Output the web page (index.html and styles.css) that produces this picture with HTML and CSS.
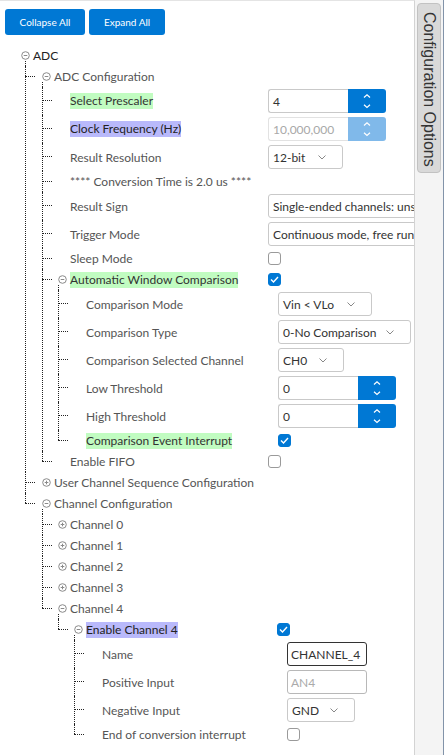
FILE: index.html
```html
<!DOCTYPE html>
<html>
<head>
<meta charset="utf-8">
<link rel="stylesheet" href="styles.css">
</head>
<body>
<div class="main">
  <div class="toolbar">
    <button class="btn btn-collapse">Collapse All</button>
    <button class="btn btn-expand">Expand All</button>
  </div>
  <div class="tree">
    <ul class="root">
      <li class="root-li">
        <div class="row"><span class="tog"><svg width="9" height="9" viewBox="0 0 9 9"><circle cx="4.5" cy="4.5" r="3.8"/><line x1="2.7" y1="4.5" x2="6.3" y2="4.5"/></svg></span><span class="lbl root-lbl">ADC</span></div>
        <ul class="sub lv1">
          <li>
            <div class="row"><span class="tog"><svg width="9" height="9" viewBox="0 0 9 9"><circle cx="4.5" cy="4.5" r="3.8"/><line x1="2.7" y1="4.5" x2="6.3" y2="4.5"/></svg></span><span class="lbl">ADC Configuration</span></div>
            <ul class="sub">
              <li>
                <div class="row tall"><span class="tog"></span><span class="cell w2"><span class="hl green">Select Prescaler</span></span>
                  <div class="spin"><div class="box">4</div><div class="arr"><svg width="10" height="24" viewBox="0 0 10 24"><polyline points="2,8.5 5,5.8 8,8.5"/><polyline points="2,15.8 5,18.5 8,15.8"/></svg></div></div>
                </div>
              </li>
              <li>
                <div class="row tall"><span class="tog"></span><span class="cell w2"><span class="hl blue">Clock Frequency (Hz)</span></span>
                  <div class="spin dis"><div class="box">10,000,000</div><div class="arr"><svg width="10" height="24" viewBox="0 0 10 24"><polyline points="2,8.5 5,5.8 8,8.5"/><polyline points="2,15.8 5,18.5 8,15.8"/></svg></div></div>
                </div>
              </li>
              <li>
                <div class="row tall"><span class="tog"></span><span class="cell w2">Result Resolution</span>
                  <div class="sel s75"><span>12-bit</span><svg width="8" height="5" viewBox="0 0 8 5"><polyline points="0.5,0.5 4,4 7.5,0.5"/></svg></div>
                </div>
              </li>
              <li>
                <div class="row"><span class="tog"></span><span class="cell">**** Conversion Time is 2.0 us ****</span></div>
              </li>
              <li>
                <div class="row tall"><span class="tog"></span><span class="cell w2">Result Sign</span>
                  <div class="sel wide"><span>Single-ended channels: unsigned</span></div>
                </div>
              </li>
              <li>
                <div class="row tall"><span class="tog"></span><span class="cell w2">Trigger Mode</span>
                  <div class="sel wide"><span>Continuous mode, free run mode</span></div>
                </div>
              </li>
              <li>
                <div class="row"><span class="tog"></span><span class="cell w2">Sleep Mode</span><span class="cb"></span></div>
              </li>
              <li>
                <div class="row"><span class="tog"><svg width="9" height="9" viewBox="0 0 9 9"><circle cx="4.5" cy="4.5" r="3.8"/><line x1="2.7" y1="4.5" x2="6.3" y2="4.5"/></svg></span><span class="cell w2"><span class="hl green">Automatic Window Comparison</span></span>
                  <span class="cb on"><svg width="9" height="7" viewBox="0 0 9 7"><polyline points="1,3.5 3.5,6 8,1"/></svg></span>
                </div>
                <ul class="sub">
                  <li>
                    <div class="row tall"><span class="tog"></span><span class="cell w3">Comparison Mode</span>
                      <div class="sel s94"><span>Vin &lt; VLo</span><svg width="8" height="5" viewBox="0 0 8 5"><polyline points="0.5,0.5 4,4 7.5,0.5"/></svg></div>
                    </div>
                  </li>
                  <li>
                    <div class="row tall"><span class="tog"></span><span class="cell w3">Comparison Type</span>
                      <div class="sel s133"><span>0-No Comparison</span><svg width="8" height="5" viewBox="0 0 8 5"><polyline points="0.5,0.5 4,4 7.5,0.5"/></svg></div>
                    </div>
                  </li>
                  <li>
                    <div class="row tall"><span class="tog"></span><span class="cell w3">Comparison Selected Channel</span>
                      <div class="sel s66"><span>CH0</span><svg width="8" height="5" viewBox="0 0 8 5"><polyline points="0.5,0.5 4,4 7.5,0.5"/></svg></div>
                    </div>
                  </li>
                  <li>
                    <div class="row tall"><span class="tog"></span><span class="cell w3">Low Threshold</span>
                      <div class="spin"><div class="box">0</div><div class="arr"><svg width="10" height="24" viewBox="0 0 10 24"><polyline points="2,8.5 5,5.8 8,8.5"/><polyline points="2,15.8 5,18.5 8,15.8"/></svg></div></div>
                    </div>
                  </li>
                  <li>
                    <div class="row tall"><span class="tog"></span><span class="cell w3">High Threshold</span>
                      <div class="spin"><div class="box">0</div><div class="arr"><svg width="10" height="24" viewBox="0 0 10 24"><polyline points="2,8.5 5,5.8 8,8.5"/><polyline points="2,15.8 5,18.5 8,15.8"/></svg></div></div>
                    </div>
                  </li>
                  <li>
                    <div class="row"><span class="tog"></span><span class="cell w3"><span class="hl green">Comparison Event Interrupt</span></span>
                      <span class="cb on"><svg width="9" height="7" viewBox="0 0 9 7"><polyline points="1,3.5 3.5,6 8,1"/></svg></span>
                    </div>
                  </li>
                </ul>
              </li>
              <li>
                <div class="row"><span class="tog"></span><span class="cell w2">Enable FIFO</span><span class="cb"></span></div>
              </li>
            </ul>
          </li>
          <li>
            <div class="row"><span class="tog"><svg width="9" height="9" viewBox="0 0 9 9"><circle cx="4.5" cy="4.5" r="3.8"/><line x1="2.7" y1="4.5" x2="6.3" y2="4.5"/><line x1="4.5" y1="2.7" x2="4.5" y2="6.3"/></svg></span><span class="lbl">User Channel Sequence Configuration</span></div>
          </li>
          <li>
            <div class="row"><span class="tog"><svg width="9" height="9" viewBox="0 0 9 9"><circle cx="4.5" cy="4.5" r="3.8"/><line x1="2.7" y1="4.5" x2="6.3" y2="4.5"/></svg></span><span class="lbl">Channel Configuration</span></div>
            <ul class="sub">
              <li><div class="row"><span class="tog"><svg width="9" height="9" viewBox="0 0 9 9"><circle cx="4.5" cy="4.5" r="3.8"/><line x1="2.7" y1="4.5" x2="6.3" y2="4.5"/><line x1="4.5" y1="2.7" x2="4.5" y2="6.3"/></svg></span><span class="lbl">Channel 0</span></div></li>
              <li><div class="row"><span class="tog"><svg width="9" height="9" viewBox="0 0 9 9"><circle cx="4.5" cy="4.5" r="3.8"/><line x1="2.7" y1="4.5" x2="6.3" y2="4.5"/><line x1="4.5" y1="2.7" x2="4.5" y2="6.3"/></svg></span><span class="lbl">Channel 1</span></div></li>
              <li><div class="row"><span class="tog"><svg width="9" height="9" viewBox="0 0 9 9"><circle cx="4.5" cy="4.5" r="3.8"/><line x1="2.7" y1="4.5" x2="6.3" y2="4.5"/><line x1="4.5" y1="2.7" x2="4.5" y2="6.3"/></svg></span><span class="lbl">Channel 2</span></div></li>
              <li><div class="row"><span class="tog"><svg width="9" height="9" viewBox="0 0 9 9"><circle cx="4.5" cy="4.5" r="3.8"/><line x1="2.7" y1="4.5" x2="6.3" y2="4.5"/><line x1="4.5" y1="2.7" x2="4.5" y2="6.3"/></svg></span><span class="lbl">Channel 3</span></div></li>
              <li>
                <div class="row"><span class="tog"><svg width="9" height="9" viewBox="0 0 9 9"><circle cx="4.5" cy="4.5" r="3.8"/><line x1="2.7" y1="4.5" x2="6.3" y2="4.5"/></svg></span><span class="lbl">Channel 4</span></div>
                <ul class="sub">
                  <li>
                    <div class="row"><span class="tog"><svg width="9" height="9" viewBox="0 0 9 9"><circle cx="4.5" cy="4.5" r="3.8"/><line x1="2.7" y1="4.5" x2="6.3" y2="4.5"/></svg></span><span class="cell w3e"><span class="hl blue">Enable Channel 4</span></span>
                      <span class="cb on"><svg width="9" height="7" viewBox="0 0 9 7"><polyline points="1,3.5 3.5,6 8,1"/></svg></span>
                    </div>
                    <ul class="sub">
                      <li>
                        <div class="row tall"><span class="tog"></span><span class="cell w4">Name</span>
                          <div class="txt">CHANNEL_4</div>
                        </div>
                      </li>
                      <li>
                        <div class="row tall"><span class="tog"></span><span class="cell w4">Positive Input</span>
                          <div class="txt dis">AN4</div>
                        </div>
                      </li>
                      <li>
                        <div class="row tall"><span class="tog"></span><span class="cell w4">Negative Input</span>
                          <div class="sel s68"><span>GND</span><svg width="8" height="5" viewBox="0 0 8 5"><polyline points="0.5,0.5 4,4 7.5,0.5"/></svg></div>
                        </div>
                      </li>
                      <li>
                        <div class="row"><span class="tog"></span><span class="cell w4">End of conversion interrupt</span><span class="cb"></span></div>
                      </li>
                    </ul>
                  </li>
                </ul>
              </li>
            </ul>
          </li>
        </ul>
      </li>
    </ul>
  </div>
</div>
<div class="side">
  <div class="tab">Configuration Options</div>
</div>
</body>
</html>
```
FILE: styles.css
```css
html, body {
  margin: 0;
  padding: 0;
}
body {
  font-family: Lato, "Noto Sans", sans-serif;
  font-size: 12px;
  color: #555;
  display: flex;
  height: 755px;
  overflow: hidden;
  background: #fff;
}
.main {
  width: 414px;
  flex-shrink: 0;
  border-right: 1px solid #d3d3d3;
  border-top: 1px solid #e4e4e4;
  overflow: hidden;
}
.toolbar {
  display: flex;
  gap: 4px;
  padding: 8px 0 0 5px;
}
.btn {
  height: 26px;
  border: 0;
  border-radius: 3px;
  background: #0078d4;
  color: #fff;
  font-family: Lato, "Noto Sans", sans-serif;
  font-size: 10px;
  padding: 0;
}
.btn-collapse { width: 80px; }
.btn-expand { width: 76px; }

.tree {
  margin-top: 10px;
  padding-left: 21px;
}
ul {
  list-style: none;
  margin: 0;
  padding: 0;
  position: relative;
}
.sub { --ind: 16px; }
.lv1 { --ind: 17px; margin-left: 4px; }
li {
  position: relative;
  padding-left: var(--ind);
}
.root-li { padding-left: 0; }
.sub::before {
  content: "";
  position: absolute;
  left: 0;
  top: -5px;
  height: 5px;
  border-left: 1px dotted #222;
}
.sub > li:not(:last-child)::after {
  content: "";
  position: absolute;
  left: 0;
  top: 0;
  bottom: 0;
  border-left: 1px dotted #222;
}
.row {
  position: relative;
  display: flex;
  align-items: center;
  height: 21px;
  white-space: nowrap;
}
.row.tall { height: 28px; }
.sub > li > .row::before {
  content: "";
  position: absolute;
  left: calc(-1 * var(--ind));
  top: 10px;
  width: 10px;
  border-top: 1px dotted #222;
}
.sub > li > .row.tall::before { top: 13px; }
.sub > li:last-child > .row::after {
  content: "";
  position: absolute;
  left: calc(-1 * var(--ind));
  top: 0;
  height: 10px;
  border-left: 1px dotted #222;
}
.sub > li:last-child > .row.tall::after { height: 13px; }

.tog {
  width: 9px;
  height: 9px;
  margin-right: 3px;
  flex-shrink: 0;
  display: flex;
}
.tog svg {
  fill: none;
  stroke: #8a8a8a;
  stroke-width: 1;
}
.lbl { color: #555; }
.root-lbl { color: #222; }
.cell {
  flex-shrink: 0;
  color: #555;
}
.w2 { width: 198px; }
.w3 { width: 192px; }
.w3e { width: 191px; }
.w4 { width: 185px; }
.hl {
  display: inline-block;
  line-height: 16px;
  color: #333;
}
.hl.green { background: #c1fcc1; }
.hl.blue { background: #b9b9fb; color: #222; }

.spin {
  display: flex;
  height: 24px;
  flex-shrink: 0;
}
.spin .box {
  width: 80px;
  box-sizing: border-box;
  border: 1px solid #c9c9c9;
  border-right: 0;
  border-radius: 3px 0 0 3px;
  padding-left: 4px;
  display: flex;
  align-items: center;
  color: #333;
}
.spin .arr {
  width: 38px;
  background: #0078d4;
  border-radius: 0 3px 3px 0;
  display: flex;
  justify-content: center;
  align-items: center;
}
.spin .arr svg {
  fill: none;
  stroke: #fff;
  stroke-width: 1.2;
}
.spin.dis .box {
  border-color: #e2e2e2;
  color: #a8a8a8;
}
.spin.dis .arr { background: #80b9ea; }

.sel {
  height: 24px;
  box-sizing: border-box;
  border: 1px solid #c9c9c9;
  border-radius: 3px;
  display: flex;
  align-items: center;
  justify-content: space-between;
  padding-left: 4px;
  color: #333;
  flex-shrink: 0;
  overflow: hidden;
}
.sel svg {
  margin-right: 16px;
  flex-shrink: 0;
  fill: none;
  stroke: #888;
  stroke-width: 1;
}
.s75 { width: 75px; }
.s94 { width: 94px; }
.s133 { width: 133px; }
.s66 { width: 66px; }
.s68 { width: 68px; }
.wide { width: 200px; }

.txt {
  width: 80px;
  height: 24px;
  box-sizing: border-box;
  border: 1px solid #333;
  border-radius: 3px;
  padding-left: 3px;
  display: flex;
  align-items: center;
  color: #333;
  flex-shrink: 0;
}
.txt.dis {
  border-color: #b8b8b8;
  color: #aaa;
}

.cb {
  width: 13px;
  height: 13px;
  box-sizing: border-box;
  border: 1px solid #9a9a9a;
  border-radius: 3px;
  background: #fff;
  flex-shrink: 0;
}
.cb.on {
  background: #0078d4;
  border-color: #0078d4;
  display: flex;
  align-items: center;
  justify-content: center;
}
.cb.on svg {
  fill: none;
  stroke: #fff;
  stroke-width: 1.4;
}

.side {
  width: 26px;
  padding: 3px 0 0 2px;
  background: #f4f4f4;
  border-right: 1px solid #8293a9;
  margin-right: 3px;
}
.tab {
  width: 24px;
  height: 170px;
  box-sizing: border-box;
  background: #d9d9d9;
  border: 1px solid #c2c2c2;
  border-radius: 4px;
  writing-mode: vertical-rl;
  font-family: "Liberation Sans", Arial, sans-serif;
  font-size: 16px;
  line-height: 22px;
  color: #333;
  padding-top: 8px;
}
```
